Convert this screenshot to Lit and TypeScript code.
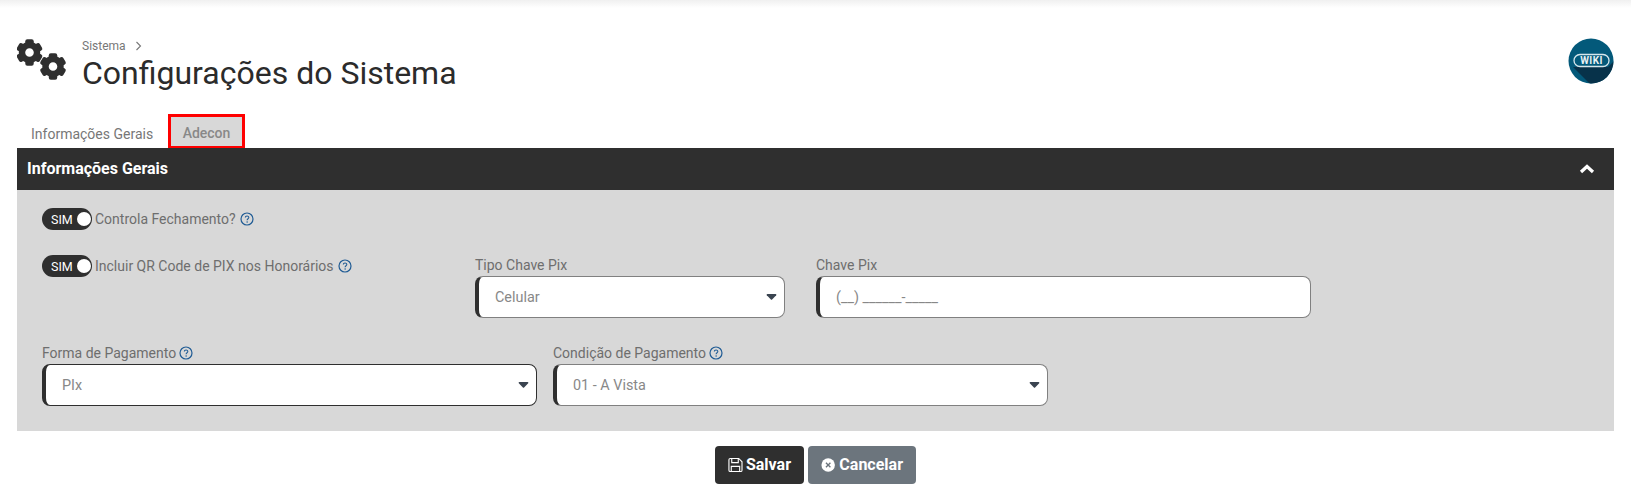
import { LitElement, html, css, svg } from "lit";
import { customElement } from "lit/decorators.js";

const gear = (cx: number, cy: number) => svg`<g transform="translate(${cx} ${cy})" fill="#2f2f2f">
  ${[0, 60, 120, 180, 240, 300].map(a => svg`<rect x="-4.2" y="-13.200" width="8.400" height="7" rx="2" transform="rotate(${a})"/>`)}
  <circle r="7.500" fill="none" stroke="#2f2f2f" stroke-width="6.400"/>
</g>`;

const help = html`<svg class="help" viewBox="0 0 14 14" width="14" height="14"><circle cx="7" cy="7" r="6" fill="none" stroke="#1f5b94" stroke-width="1.200"/><path d="M5.300 5.600c0-2.200 3.500-2.200 3.500-.1 0 1.300-1.700 1.200-1.700 2.700" fill="none" stroke="#1f5b94" stroke-width="1.100"/><circle cx="7.100" cy="10" r=".75" fill="#1f5b94"/></svg>`;

const caret = html`<svg class="caret" viewBox="0 0 12 7" width="11" height="6"><path d="M1.200 0h9.600c.8 0 1.200.9.7 1.500L6.700 6.300c-.4.4-1 .4-1.400 0L.5 1.500C0 .9.4 0 1.200 0z" fill="#3a4450"/></svg>`;

@customElement("app-root")
export class AppRoot extends LitElement {
  static styles = css`
    :host { display: block; width: 1631px; height: 491px; overflow: hidden; background: #fff; font-family: Roboto, sans-serif; color: #6e6e6e; font-size: 14px; }
    .top { height: 8px; background: linear-gradient(#f0f0f0, #fff); }
    .head { display: flex; padding: 26px 17px 0 17px; height: 106px; box-sizing: border-box; }
    .gears { width: 65px; flex: none; margin-top: 3px; }
    .gears svg { display: block; }
    .titles { flex: 1; }
    .crumb { display: flex; align-items: center; gap: 9px; font-size: 12px; line-height: 14px; margin-top: 5px; color: #777; }
    .crumb svg { display: block; }
    h1 { margin: 1px 0 0; font-weight: 400; font-size: 32px; line-height: 38px; color: #2b2b2b; }
    .wiki { margin-top: 4px; display: block; }
    .tabs { display: flex; height: 35px; margin-left: 17px; align-items: stretch; }
    .tab { display: flex; align-items: center; padding: 5px 15px 0 14px; color: #777; box-sizing: border-box; }
    .tab.on { padding: 2px 11.500px 0; border: 3px solid #f00; background: #d8d8d8; font-weight: 500; color: #888; }
    .panel { margin: -1px 17px 0; position: relative; }
    .bar { height: 42px; background: #2f2f2f; color: #fff; display: flex; align-items: center; justify-content: space-between; padding: 0 19px 0 10px; font-weight: 700; font-size: 16px; }
    .bar span { margin-bottom: 2px; }
    .body { height: 241px; box-sizing: border-box; background: #d8d8d8; padding: 18px 25px 0; display: flex; flex-direction: column; }
    .sw-row { display: flex; align-items: center; gap: 3px; height: 22px; }
    .switch { width: 50px; height: 22px; flex: none; border-radius: 11px; background: #2f2f2f; color: #fff; font-size: 12.500px; display: flex; align-items: center; justify-content: space-between; padding: 0 1px 0 9px; box-sizing: border-box; }
    .switch i { width: 14px; height: 14px; border-radius: 50%; background: #fff; }
    .help { flex: none; margin-left: 1px; display: block; }
    .label .help { margin-left: 3px; }
    .row2 { display: flex; margin-top: 25px; }
    .col-left { width: 433px; flex: none; }
    .field { display: flex; flex-direction: column; }
    .label { display: flex; align-items: center; height: 20px; line-height: 20px; margin-bottom: 1px; white-space: nowrap; }
    .input { height: 42px; box-sizing: border-box; background: #fff; border: 1px solid #808080; border-left: 4px solid #2f2f2f; border-radius: 8px; display: flex; align-items: center; justify-content: space-between; padding: 0 7px 0 16px; color: #888; font-size: 14.400px; }
    .input.dark { border-color: #2f2f2f; }
    .w310 { width: 310px; margin-right: 31px; }
    .w495 { width: 495px; }
    .row3 { display: flex; gap: 16px; margin-top: 25px; }
    .actions { display: flex; justify-content: center; gap: 4px; margin-top: 15px; }
    button { height: 38px; border: 0; border-radius: 4px; color: #fff; font: 700 16px Roboto, sans-serif; display: flex; align-items: center; gap: 3px; padding: 0 13px; }
    button span { margin-bottom: 2px; }
    .save { background: #2f2f2f; width: 89px; }
    .cancel { background: #6c757d; width: 108px; gap: 4px; }
  `;

  render() {
    return html`
      <div class="top"></div>
      <div class="head">
        <div class="gears"><svg width="65" height="50" viewBox="0 0 65 50">${gear(12.5, 15.5)}${gear(36, 29.5)}</svg></div>
        <div class="titles">
          <div class="crumb">Sistema <svg width="7" height="10" viewBox="0 0 7 10"><path d="M1.500 1l4 4-4 4" fill="none" stroke="#777" stroke-width="1.100"/></svg></div>
          <h1>Configurações do Sistema</h1>
        </div>
        <svg class="wiki" width="46" height="46" viewBox="0 0 46 46">
          <defs><clipPath id="c"><circle cx="23" cy="23" r="22.500"/></clipPath></defs>
          <circle cx="23" cy="23" r="22.500" fill="#03597a"/>
          <path d="M5 29h35l8-8v27H24z" fill="#07324a" clip-path="url(#c)"/>
          <rect x="6" y="16.500" width="35" height="12" rx="6" fill="#03597a" stroke="#d5e6ec" stroke-width="1.300"/>
          <text x="23.500" y="26" text-anchor="middle" font-family="Roboto, sans-serif" font-weight="700" font-size="10" letter-spacing=".4" fill="#e8f1f4">WIKI</text>
        </svg>
      </div>
      <div class="tabs">
        <div class="tab">Informações Gerais</div>
        <div class="tab on">Adecon</div>
      </div>
      <div class="panel">
        <div class="bar"><span>Informações Gerais</span>
          <svg width="16" height="10" viewBox="0 0 16 10"><path d="M2 8l6-5.500L14 8" fill="none" stroke="#fff" stroke-width="3.200"/></svg>
        </div>
        <div class="body">
          <div class="sw-row"><div class="switch">SIM<i></i></div>Controla Fechamento?${help}</div>
          <div class="row2">
            <div class="col-left"><div class="sw-row"><div class="switch">SIM<i></i></div>Incluir QR Code de PIX nos Honorários${help}</div></div>
            <div class="field w310"><div class="label">Tipo Chave Pix</div><div class="input">Celular ${caret}</div></div>
            <div class="field w495"><div class="label">Chave Pix</div><div class="input">(__) ______-_____</div></div>
          </div>
          <div class="row3">
            <div class="field w495"><div class="label">Forma de Pagamento${help}</div><div class="input dark">PIx ${caret}</div></div>
            <div class="field w495"><div class="label">Condição de Pagamento${help}</div><div class="input">01 - A Vista ${caret}</div></div>
          </div>
        </div>
      </div>
      <div class="actions">
        <button class="save"><svg width="16" height="16" viewBox="0 0 16 16" fill="none" stroke="#fff" stroke-width="1.200"><path d="M1 2.500C1 1.700 1.700 1 2.500 1h9L15 4.500v9c0 .8-.7 1.500-1.500 1.500h-11C1.700 15 1 14.300 1 13.500z"/><path d="M4 1v4.500h7V1M3.500 15V9.500h9V15"/></svg><span>Salvar</span></button>
        <button class="cancel"><svg width="16" height="16" viewBox="0 0 16 16"><circle cx="8" cy="8" r="7.500" fill="#fff"/><path d="M5.500 5.500l5 5M10.500 5.500l-5 5" stroke="#6c757d" stroke-width="1.500"/></svg><span>Cancelar</span></button>
      </div>
    `;
  }
}
